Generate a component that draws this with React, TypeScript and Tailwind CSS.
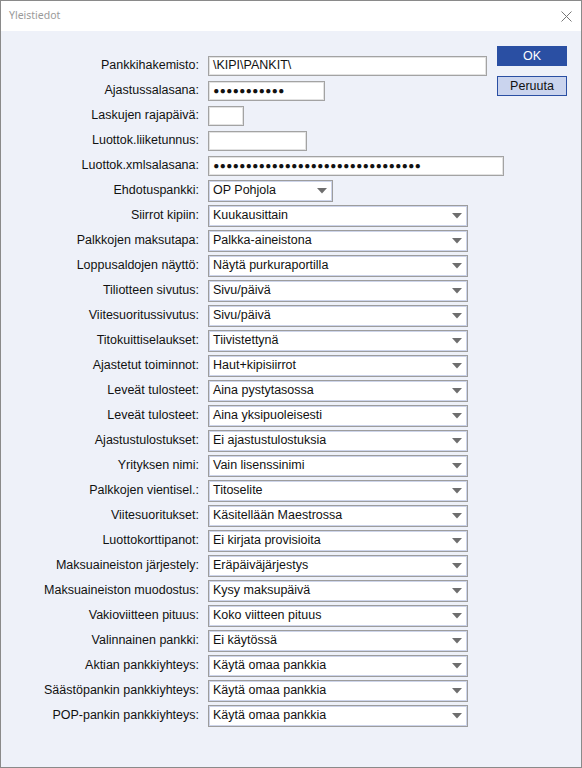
import React from "react";

type Row =
  | { label: string; kind: "text"; width: number; value?: string; dots?: number }
  | { label: string; kind: "select"; width: number; value: string };

const rows: Row[] = [
  { label: "Pankkihakemisto:", kind: "text", width: 279, value: "\\KIPI\\PANKIT\\" },
  { label: "Ajastussalasana:", kind: "text", width: 117, dots: 11 },
  { label: "Laskujen rajapäivä:", kind: "text", width: 36 },
  { label: "Luottok.liiketunnus:", kind: "text", width: 99 },
  { label: "Luottok.xmlsalasana:", kind: "text", width: 296, dots: 32 },
  { label: "Ehdotuspankki:", kind: "select", width: 125, value: "OP Pohjola" },
  { label: "Siirrot kipiin:", kind: "select", width: 260, value: "Kuukausittain" },
  { label: "Palkkojen maksutapa:", kind: "select", width: 260, value: "Palkka-aineistona" },
  { label: "Loppusaldojen näyttö:", kind: "select", width: 260, value: "Näytä purkuraportilla" },
  { label: "Tiliotteen sivutus:", kind: "select", width: 260, value: "Sivu/päivä" },
  { label: "Viitesuoritussivutus:", kind: "select", width: 260, value: "Sivu/päivä" },
  { label: "Titokuittiselaukset:", kind: "select", width: 260, value: "Tiivistettynä" },
  { label: "Ajastetut toiminnot:", kind: "select", width: 260, value: "Haut+kipisiirrot" },
  { label: "Leveät tulosteet:", kind: "select", width: 260, value: "Aina pystytasossa" },
  { label: "Leveät tulosteet:", kind: "select", width: 260, value: "Aina yksipuoleisesti" },
  { label: "Ajastustulostukset:", kind: "select", width: 260, value: "Ei ajastustulostuksia" },
  { label: "Yrityksen nimi:", kind: "select", width: 260, value: "Vain lisenssinimi" },
  { label: "Palkkojen vientisel.:", kind: "select", width: 260, value: "Titoselite" },
  { label: "Viitesuoritukset:", kind: "select", width: 260, value: "Käsitellään Maestrossa" },
  { label: "Luottokorttipanot:", kind: "select", width: 260, value: "Ei kirjata provisioita" },
  { label: "Maksuaineiston järjestely:", kind: "select", width: 260, value: "Eräpäiväjärjestys" },
  { label: "Maksuaineiston muodostus:", kind: "select", width: 260, value: "Kysy maksupäivä" },
  { label: "Vakioviitteen pituus:", kind: "select", width: 260, value: "Koko viitteen pituus" },
  { label: "Valinnainen pankki:", kind: "select", width: 260, value: "Ei käytössä" },
  { label: "Aktian pankkiyhteys:", kind: "select", width: 260, value: "Käytä omaa pankkia" },
  { label: "Säästöpankin pankkiyhteys:", kind: "select", width: 260, value: "Käytä omaa pankkia" },
  { label: "POP-pankin pankkiyhteys:", kind: "select", width: 260, value: "Käytä omaa pankkia" },
];

function Dots({ n }: { n: number }) {
  return (
    <span className="flex items-center">
      {Array.from({ length: n }).map((_, i) => (
        <span key={i} className="inline-block w-[6.5px] text-center text-[10px] leading-none">
          ●
        </span>
      ))}
    </span>
  );
}

function Field({ row }: { row: Row }) {
  if (row.kind === "text") {
    return (
      <div
        className="flex h-[20px] items-center border border-[#a3a3a3] bg-white pl-[4px] shadow-[inset_0_0_0_1px_#e2e2e2]"
        style={{ width: row.width }}
      >
        {row.dots ? <Dots n={row.dots} /> : <span className="whitespace-nowrap">{row.value ?? ""}</span>}
      </div>
    );
  }
  return (
    <div
      className="flex h-[22px] items-center justify-between border border-[#9d9d9d] bg-white pl-[4px] pr-[5px] shadow-[inset_0_0_0_1px_#cdd4ea]"
      style={{ width: row.width }}
    >
      <span className="whitespace-nowrap">{row.value}</span>
      <svg width="10" height="6" viewBox="0 0 10 6" className="mt-[1px]">
        <polygon points="0,0 10,0 5,5.5" fill="#6e6e6e" />
      </svg>
    </div>
  );
}

export default function App() {
  return (
    <div className="flex h-[768px] w-[582px] flex-col border border-[#8a8a8a] bg-white font-['Liberation_Sans',Arial,sans-serif] text-[12.5px] text-[#111]">
      <div className="flex h-[30px] shrink-0 items-center justify-between bg-white pl-[8px] pr-[9px]">
        <span className="font-['Noto_Sans',sans-serif] text-[10.5px] text-[#9a9a9a]">Yleistiedot</span>
        <svg width="11" height="11" viewBox="0 0 11 11">
          <line x1="0.5" y1="0.5" x2="10.5" y2="10.5" stroke="#777" strokeWidth="1" />
          <line x1="10.5" y1="0.5" x2="0.5" y2="10.5" stroke="#777" strokeWidth="1" />
        </svg>
      </div>
      <div className="flex flex-1 bg-[#eef1f9]">
        <div className="w-[496px] shrink-0 pt-[22px]">
          {rows.map((row, i) => (
            <div key={i} className="flex h-[25px] items-center">
              <div className="w-[199px] shrink-0 whitespace-nowrap pr-[1px] text-right">{row.label}</div>
              <div className="ml-[8px]">
                <Field row={row} />
              </div>
            </div>
          ))}
        </div>
        <div className="flex w-[70px] flex-col gap-[10px] pt-[15px]">
          <div className="flex h-[20px] items-center justify-center bg-[#2a4fa3] text-white">OK</div>
          <div className="flex h-[20px] items-center justify-center border border-[#2a4fa3] bg-[#cad4ee] text-[#111]">
            Peruuta
          </div>
        </div>
      </div>
    </div>
  );
}
